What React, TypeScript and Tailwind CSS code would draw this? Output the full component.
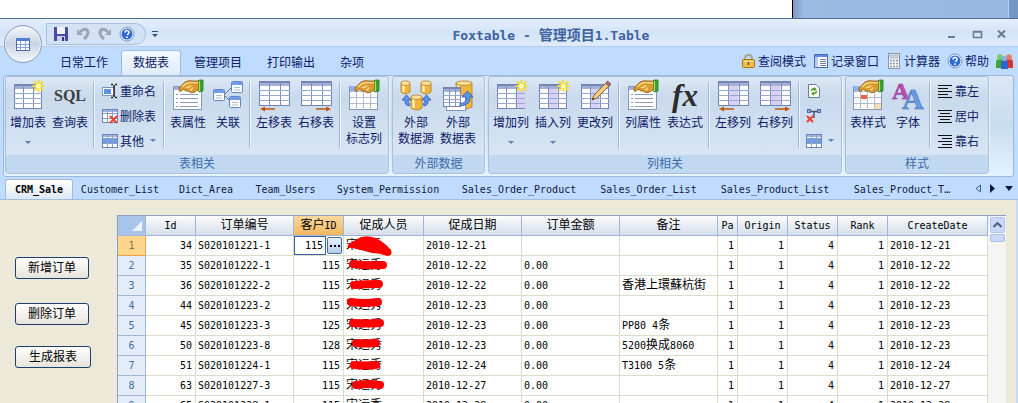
import React, { useState } from 'react';

const MONO = "font-['DejaVu_Sans_Mono','Noto_Sans_CJK_SC',monospace]";

/** Latin runs are set smaller than Chinese ones so that both keep the half/full width rhythm. */
function Mixed({ text, latin = 'text-[10px]' }: { text: string; latin?: string }) {
  const parts = text.match(/[\x00-\x7F…]+|[^\x00-\x7F…]+/g) ?? [];
  return (
    <>
      {parts.map((p, i) =>
        /^[\x00-\x7F…]/.test(p) ? (
          <span key={i} className={`leading-none ${MONO} ${latin}`}>
            {p}
          </span>
        ) : (
          <React.Fragment key={i}>{p}</React.Fragment>
        )
      )}
    </>
  );
}

/* ---------- icons ---------- */

function Svg({ size = 32, children }: { size?: number; children: React.ReactNode }) {
  return (
    <svg
      width={size}
      height={size}
      viewBox={`0 0 ${size} ${size}`}
      className="shrink-0 overflow-visible"
      aria-hidden="true"
    >
      {children}
    </svg>
  );
}

function Grid({ x = 2, y = 4, w = 28, h = 25, hl }: { x?: number; y?: number; w?: number; h?: number; hl?: number }) {
  const cw = w / 3;
  const rh = (h - 5) / 4;
  return (
    <g>
      <rect x={x + 0.5} y={y + 0.5} width={w - 1} height={h - 1} fill="#fff" stroke="#6f83b4" />
      <rect x={x} y={y} width={w} height={5} fill="#7485b4" />
      <rect x={x + 1} y={y + 2} width={w - 2} height={3} fill="#a3b1d4" />
      {hl !== undefined && <rect x={x + hl * cw} y={y + 5} width={cw} height={h - 6} fill="#d9d0f5" />}
      {[1, 2].map((c) => (
        <path key={c} d={`M${Math.round(x + c * cw) + 0.5} ${y}V${y + h}`} stroke="#7d90bd" />
      ))}
      {[1, 2, 3].map((r) => (
        <path key={r} d={`M${x} ${y + 5 + Math.round(r * rh) - 0.5}H${x + w}`} stroke="#98a8cc" />
      ))}
    </g>
  );
}

const Star = () => (
  <g>
    <path d="M26.5 0V12M20.5 6H32.5M22 1.500L31 10.500M31 1.500L22 10.500" stroke="#f3dc3a" strokeWidth="2" />
    <circle cx="26.5" cy="6" r="2.6" fill="#fff9a8" />
  </g>
);

const Hand = () => (
  <g>
    <path
      d="M7 10Q6 8 9 6L13 2Q16 0 21 1H27V10Q24 10 23 12Q19 14 16 11Q13 12 12 9L9 11Q7 12 7 10Z"
      fill="#d99a30"
      stroke="#8a5a16"
      strokeWidth="0.8"
    />
    <path d="M10 7L14 3.500Q18 2 26 3M14 7.500Q17 8 19 5.500M18 10Q20 10 21 7.500" stroke="#f9dc90" strokeWidth="1.4" fill="none" />
    <path d="M27 0H31V11L27 12Z" fill="#3aa52f" stroke="#23771f" strokeWidth="0.8" />
    <path d="M27.500 1V11" stroke="#b6e35c" />
  </g>
);

const GridStar = ({ hl }: { hl?: number }) => (
  <Svg>
    <Grid hl={hl} />
    <Star />
  </Svg>
);

const MoveIcon = ({ dir, hl }: { dir: 'left' | 'right'; hl?: number }) => (
  <Svg>
    <Grid x={1} y={1} w={31} h={25} hl={hl} />
    {dir === 'left' ? (
      <path d="M2 29L7 26.5V28.2H17V29.8H7V31.5Z" fill="#c4550f" />
    ) : (
      <path d="M31 29L26 26.5V28.2H16V29.8H26V31.5Z" fill="#c4550f" />
    )}
  </Svg>
);

const PropertyIcon = () => (
  <Svg>
    <rect x="1.5" y="6.5" width="28" height="23" fill="#fff" stroke="#8a97b4" />
    <rect x="2" y="7" width="6" height="3" fill="#9bb4e6" />
    <path d="M4 14.5H6M8 14.5H26M4 18.5H6M8 18.5H26M4 22.5H6M8 22.5H26M4 26.5H6M8 26.5H26" stroke="#8f9bb8" />
    <Hand />
  </Svg>
);

const HandGridIcon = ({ mark }: { mark?: boolean }) => (
  <Svg>
    <rect x="1.5" y="6.5" width="28" height="23" fill="#fff" stroke="#8a97b4" />
    <rect x="2" y="6" width="8" height="5" fill="#92b0ec" />
    <path d="M8.5 11V30M15.5 11V30M22.5 11V30M2 11.5H29M2 17.5H29M2 23.5H29" stroke="#b4bccd" />
    {mark && <rect x="9" y="15" width="6" height="4" fill="#f2633c" />}
    {mark && <rect x="23" y="24" width="6" height="5" fill="#fbdfb0" />}
    <Hand />
  </Svg>
);

const MiniWin = ({ x, y }: { x: number; y: number }) => (
  <g>
    <rect x={x + 0.5} y={y + 0.5} width="11" height="11" rx="1" fill="#fff" stroke="#6585bd" />
    <rect x={x + 1} y={y + 1} width="10" height="3" fill="#6f9ce8" />
    <path d={`M${x + 3} ${y + 6.5}H${x + 9}M${x + 3} ${y + 9}H${x + 9}`} stroke="#aebbd4" />
  </g>
);

const RelationIcon = () => (
  <Svg>
    <path d="M13 14L20 7M13 16L18 21" stroke="#5f6f8f" />
    <MiniWin x={1} y={9} />
    <MiniWin x={19} y={1} />
    <MiniWin x={17} y={16} />
  </Svg>
);

const Cylinder = ({ x, y, w = 11, h = 14 }: { x: number; y: number; w?: number; h?: number }) => (
  <g stroke="#b47a1d" strokeWidth="0.8">
    <path
      d={`M${x} ${y + 2}V${y + h - 2}Q${x + w / 2} ${y + h + 2} ${x + w} ${y + h - 2}V${y + 2}Z`}
      fill="#f0b53c"
    />
    <path d={`M${x + 2.5} ${y + 4}V${y + h - 2}`} stroke="#fff0b4" strokeWidth="2.5" />
    <ellipse cx={x + w / 2} cy={y + 2.2} rx={w / 2} ry="2.2" fill="#ffe39a" />
  </g>
);

const DataSourceIcon = () => (
  <Svg>
    <Cylinder x={1} y={1} w={9} h={13} />
    <Cylinder x={21} y={1} w={10} h={13} />
    <Cylinder x={11} y={15} w={11} h={15} />
    <path d="M9 26Q4 25 5 20H2L6.500 15L11 20H8Q8 23 10 24Z" fill="#5b93e8" stroke="#2c5aae" strokeWidth="0.8" />
    <path d="M24 26Q29 25 28 20H31L26.500 15L22 20H25Q25 23 23 24Z" fill="#5b93e8" stroke="#2c5aae" strokeWidth="0.8" />
  </Svg>
);

const DataTableIcon = () => (
  <Svg>
    <Cylinder x={14} y={1} w={16} h={28} />
    <rect x="4.500" y="15.500" width="19" height="15" fill="#fff" stroke="#8594b5" />
    <Grid x={1} y={7} w={18} h={20} />
    <path d="M18 23Q25 24 24 17H20L25.500 11L31 17H28Q29 25 18 26Z" fill="#5b93e8" stroke="#2c5aae" strokeWidth="0.8" />
  </Svg>
);

const EditColIcon = () => (
  <Svg>
    <Grid hl={1} />
    <path d="M13 20L15 15L28 2L31 5L18 18Z" fill="#f3cb82" stroke="#8d6430" />
    <path d="M26.500 3.500L28.500 1L32 4L30 6.500Z" fill="#c8546a" stroke="#4f7a64" strokeWidth="0.8" />
    <path d="M13 20L14 17.500L15.500 19Z" fill="#333" />
  </Svg>
);

const FontsIcon = () => (
  <Svg>
    <g className="font-['Liberation_Serif',serif] font-bold">
      <text x="0" y="19" fontSize="24" fill="#c04bb4" stroke="#8c2f88" strokeWidth="0.5">
        A
      </text>
      <text x="10" y="29" fontSize="30" fill="#6a9be0" stroke="#3c69ad" strokeWidth="0.5">
        A
      </text>
    </g>
  </Svg>
);

const SmallGrid = ({ red, band }: { red?: boolean; band?: boolean }) => (
  <Svg size={16}>
    <rect x="0.500" y="1.500" width="15" height="13" fill="#fff" stroke="#6d83b5" />
    <rect x="1" y="2" width="14" height="2" fill="#9db4e2" />
    {band && <rect x="1" y="6" width="14" height="4" fill="#6f9be6" />}
    <path d="M5.500 2V14M10.500 2V14M1 5.500H15M1 10.500H15" stroke="#8f9fc4" />
    {red && <path d="M8 8L15 15M15 8L8 15" stroke="#e8412c" strokeWidth="2" />}
  </Svg>
);

const RenameIcon = () => (
  <Svg size={16}>
    <rect x="0.500" y="4.500" width="12" height="8" fill="#fff" stroke="#7e95c1" />
    <rect x="2" y="6" width="7" height="5" fill="#5d8fe6" />
    <path d="M9 1.500H11M13 1.500H15M12 2V14M9 14.500H11M13 14.500H15" stroke="#222" strokeWidth="1.500" />
  </Svg>
);

const RefreshIcon = () => (
  <Svg size={16}>
    <path d="M2.500 1.500H10L13.500 5V14.500H2.500Z" fill="#fdfdf2" stroke="#6b7c8e" />
    <path d="M5.500 8Q6 5 9 6M10.500 8Q10 11 7 10.500" stroke="#4a9a27" strokeWidth="1.500" fill="none" />
    <path d="M8 4L11 6.500L8 8ZM8 8.500L5 10.500L8 12.500Z" fill="#4a9a27" />
  </Svg>
);

const FilterOffIcon = () => (
  <Svg size={16}>
    <path d="M4 3.500H12M8 4V10" fill="none" stroke="#46536e" strokeWidth="1.500" />
    <rect x="1.500" y="1.500" width="3" height="3" fill="#8fabdf" stroke="#4b66a4" />
    <rect x="11.500" y="1.500" width="3" height="3" fill="#8fabdf" stroke="#4b66a4" />
    <path d="M1 8L7 14M7 8L1 14" stroke="#e8412c" strokeWidth="2" />
  </Svg>
);

const AlignIcon = ({ kind }: { kind: 'left' | 'center' | 'right' }) => {
  const start = { left: 1, center: 3, right: 5 }[kind];
  return (
    <Svg size={16}>
      <path d={`M1 2.500H15M${start} 5.500h10M1 8.500H15M${start} 11.500h10M1 14.500H15`} stroke="#111" strokeWidth="1" />
    </Svg>
  );
};

const HelpIcon = () => (
  <Svg size={16}>
    <circle cx="8" cy="8" r="7" fill="#eef4ff" stroke="#7a96c8" />
    <circle cx="8" cy="8" r="5.500" fill="#2f6bd0" />
    <path d="M6 6.500Q6 4.500 8 4.500T10 6.500Q10 7.500 8 8.800" stroke="#fff" strokeWidth="1.500" fill="none" />
    <circle cx="8" cy="11.200" r="0.900" fill="#fff" />
  </Svg>
);

const LockIcon = () => (
  <Svg size={16}>
    <path d="M5 7V5Q5 2 8.500 2T12 5V7" fill="none" stroke="#a9a183" strokeWidth="1.800" />
    <rect x="2.500" y="6.500" width="12" height="8" rx="1" fill="#f1be45" stroke="#a8741a" />
    <path d="M4 8.500H13" stroke="#ffe9a2" />
    <path d="M8.500 9V12" stroke="#6d4a12" strokeWidth="1.500" />
  </Svg>
);

const RecordIcon = () => (
  <Svg size={16}>
    <rect x="1.500" y="1.500" width="13" height="13" fill="#fff" stroke="#4a69ae" />
    <rect x="2" y="2" width="12" height="2" fill="#5f8be0" />
    <rect x="2" y="4" width="3" height="10" fill="#b6cbf3" />
    <path d="M7 6.500H13M7 8.500H13M7 10.500H13M7 12.500H13" stroke="#6b7fae" />
  </Svg>
);

const CalcIcon = () => (
  <Svg size={16}>
    <rect x="2.500" y="0.500" width="11" height="15" fill="#f2f3f5" stroke="#8b95a6" />
    <rect x="4" y="2" width="8" height="3" fill="#c5d6e4" stroke="#8795a8" strokeWidth="0.500" />
    <path d="M4 7.500H12M4 10.500H12M4 13.500H12" stroke="#8f99aa" strokeWidth="1.500" strokeDasharray="2 1" />
  </Svg>
);

const PeopleIcon = () => (
  <svg width="17" height="16" viewBox="0 0 17 16" aria-hidden="true">
    <path d="M0 15V9Q0 6 4 6T8 9V15Z" fill="#38a838" />
    <circle cx="4" cy="4" r="2.800" fill="#70cf62" />
    <path d="M9 15V9Q9 6 13 6T17 9V15Z" fill="#dc3528" />
    <circle cx="13" cy="4" r="2.800" fill="#ee7c60" />
    <path d="M5 16V10Q5 7 8.500 7T12 10V16Z" fill="#2f62cc" />
    <circle cx="8.500" cy="5.500" r="2.600" fill="#84aaf0" />
  </svg>
);

const SaveIcon = () => (
  <Svg size={16}>
    <path d="M1 1H14L15 2V15H1Z" fill="#4a4aa8" />
    <rect x="4" y="1" width="8" height="7" fill="#eef2ff" />
    <rect x="4" y="10" width="8" height="5" fill="#c8d0ec" />
    <rect x="9" y="11" width="2" height="4" fill="#32327e" />
  </Svg>
);

const UndoIcon = ({ flip }: { flip?: boolean }) => (
  <Svg size={16}>
    <g transform={flip ? 'translate(16 0) scale(-1 1)' : undefined}>
      <path d="M5 6Q9 2 12 4Q15 8 9 13" fill="none" stroke="#9ba5b4" strokeWidth="3" />
      <path d="M2 3V9H8Z" fill="#9ba5b4" />
    </g>
  </Svg>
);

const Arrow = () => <span className="inline-block border-x-[3px] border-t-[3px] border-x-transparent border-t-[#6180ad]" />;

/* ---------- ribbon ---------- */

interface BigProps {
  icon: React.ReactNode;
  lines: string[];
  drop?: boolean;
  narrow?: boolean;
}

function BigButton({ icon, lines, drop, narrow }: BigProps) {
  return (
    <button
      type="button"
      className={`flex flex-col items-center pt-[2px] text-[12px] leading-4 whitespace-nowrap ${narrow ? 'w-[38px]' : 'w-[42px]'}`}
    >
      <span className="mb-[2px] flex h-8 items-center justify-center">{icon}</span>
      {lines.map((l) => (
        <span key={l}>{l}</span>
      ))}
      {drop && (
        <span className="flex h-6 items-center">
          <Arrow />
        </span>
      )}
    </button>
  );
}

function SmallButton({ icon, label, drop }: { icon: React.ReactNode; label?: string; drop?: boolean }) {
  return (
    <button type="button" aria-label={label ?? '列选项'} className="flex h-[25px] items-center gap-[2px] text-[12px] whitespace-nowrap">
      {icon}
      {label}
      {drop && (
        <span className="ml-1 flex">
          <Arrow />
        </span>
      )}
    </button>
  );
}

const Sep = () => (
  <div className="flex h-[70px] w-[6px] shrink-0 justify-center pt-1">
    <div className="w-px bg-[#9fb7d6]" />
    <div className="w-px bg-[#eef5fd]" />
  </div>
);

function Group({ title, width, children }: { title: string; width: string; children: React.ReactNode }) {
  return (
    <section
      className={`flex h-[98px] shrink-0 flex-col overflow-hidden rounded-[3px] border border-[#a9c0dc] bg-linear-to-b from-[#dce8f5] via-[#c9daed] via-20% to-[#dbe8f6] shadow-[1px_1px_0_#eef6ff] ${width}`}
    >
      <div className="flex flex-1 px-[1px] pt-[1px]">{children}</div>
      <h2 className="h-[18px] bg-[#c1d8f1] text-center text-[12px] leading-4 text-[#3e6aaa]">{title}</h2>
    </section>
  );
}

function Ribbon() {
  return (
    <div className="mr-1 ml-[3px] flex h-[102px] gap-[3px] rounded-[3px] border border-[#9cb8db] bg-linear-to-b from-[#dbe7f5] via-[#c9dcf0] to-[#e4f3ff] px-[1px]">
      <Group title="表相关" width="w-[384px]">
        <BigButton icon={<GridStar />} lines={['增加表']} drop />
        <BigButton
          icon={<span className="font-['Liberation_Serif',serif] text-[16px] font-bold text-[#3d3d3d]">SQL</span>}
          lines={['查询表']}
        />
        <Sep />
        <div className="w-[64px] pl-[5px]">
          <SmallButton icon={<RenameIcon />} label="重命名" />
          <SmallButton icon={<SmallGrid red />} label="删除表" />
          <SmallButton icon={<SmallGrid band />} label="其他" drop />
        </div>
        <Sep />
        <BigButton icon={<PropertyIcon />} lines={['表属性']} />
        <BigButton icon={<RelationIcon />} lines={['关联']} narrow />
        <Sep />
        <BigButton icon={<MoveIcon dir="left" />} lines={['左移表']} />
        <BigButton icon={<MoveIcon dir="right" />} lines={['右移表']} />
        <Sep />
        <BigButton icon={<HandGridIcon />} lines={['设置', '标志列']} />
      </Group>

      <Group title="外部数据" width="w-[93px]">
        <div className="flex pl-[1px]">
          <BigButton icon={<DataSourceIcon />} lines={['外部', '数据源']} />
          <BigButton icon={<DataTableIcon />} lines={['外部', '数据表']} />
        </div>
      </Group>

      <Group title="列相关" width="w-[354px]">
        <BigButton icon={<GridStar hl={2} />} lines={['增加列']} drop />
        <BigButton icon={<GridStar hl={1} />} lines={['插入列']} drop />
        <BigButton icon={<EditColIcon />} lines={['更改列']} />
        <Sep />
        <BigButton icon={<PropertyIcon />} lines={['列属性']} />
        <BigButton
          icon={<span className="font-['Liberation_Serif',serif] text-[31px] leading-8 font-bold text-[#2b2b2b] italic">fx</span>}
          lines={['表达式']}
        />
        <Sep />
        <BigButton icon={<MoveIcon dir="left" hl={1} />} lines={['左移列']} />
        <BigButton icon={<MoveIcon dir="right" hl={1} />} lines={['右移列']} />
        <Sep />
        <div className="pl-1">
          <SmallButton icon={<RefreshIcon />} />
          <SmallButton icon={<FilterOffIcon />} />
          <SmallButton icon={<SmallGrid band />} drop />
        </div>
      </Group>

      <Group title="样式" width="w-[144px]">
        <BigButton icon={<HandGridIcon mark />} lines={['表样式']} />
        <BigButton icon={<FontsIcon />} lines={['字体']} narrow />
        <Sep />
        <div className="pl-1">
          <SmallButton icon={<AlignIcon kind="left" />} label="靠左" />
          <SmallButton icon={<AlignIcon kind="center" />} label="居中" />
          <SmallButton icon={<AlignIcon kind="right" />} label="靠右" />
        </div>
      </Group>
    </div>
  );
}

/* ---------- title bar and menu ---------- */

function TitleBar() {
  return (
    <header className="flex h-[29px] items-center border-t border-b border-t-[#4d6d9c] border-b-[#b3cdee] bg-linear-to-b from-[#e6f0fd] via-[#d3e3f8] to-[#e0ecfb] pt-[3px]">
      <div className="ml-[46px] flex h-[22px] w-[100px] items-center gap-[6px] rounded-r-full border border-[#a5bfdf] bg-[#d3e2f5] pl-[6px]">
        <button type="button" aria-label="保存">
          <SaveIcon />
        </button>
        <button type="button" aria-label="撤消">
          <UndoIcon />
        </button>
        <button type="button" aria-label="重做">
          <UndoIcon flip />
        </button>
        <button type="button" aria-label="帮助">
          <HelpIcon />
        </button>
      </div>
      <button type="button" aria-label="自定义" className="ml-[6px] flex flex-col items-center gap-[2px]">
        <span className="h-px w-[6px] bg-[#31507f]" />
        <span className="border-x-[3px] border-t-[3px] border-x-transparent border-t-[#31507f]" />
      </button>
      <h1 className="flex-1 text-center text-[14px] leading-5 font-bold whitespace-pre text-[#3e629f]">
        <Mixed text="Foxtable - 管理项目1.Table" latin="text-[13px]" />
      </h1>
      <div className="mr-[8px] flex items-center gap-[9px]">
        <button type="button" aria-label="最小化">
          <Svg size={16}>
            <path d="M4 11H11" stroke="#6b7a92" strokeWidth="2" />
          </Svg>
        </button>
        <button type="button" aria-label="最大化">
          <Svg size={16}>
            <path d="M4.500 5.500H12.500V11.500H4.500ZM4 6H13" stroke="#6b7a92" strokeWidth="1.500" fill="none" />
          </Svg>
        </button>
        <button type="button" aria-label="关闭">
          <Svg size={16}>
            <path d="M4 4.500L11 11.500M11 4.500L4 11.500" stroke="#6b7a92" strokeWidth="2" />
          </Svg>
        </button>
      </div>
    </header>
  );
}

const MENUS = ['日常工作', '数据表', '管理项目', '打印输出', '杂项'];

function MenuBar() {
  const [active, setActive] = useState('数据表');
  return (
    <nav className="flex h-[28px] items-end justify-between pr-[5px] pl-[48px] text-[12px]">
      <div className="flex">
        {MENUS.map((m) => (
          <button
            key={m}
            type="button"
            onClick={() => setActive(m)}
            className={`mr-[1px] h-[25px] rounded-t-[3px] border border-b-0 px-[11px] pb-[3px] ${
              m === active ? 'border-[#9cbce4] bg-linear-to-b from-[#f4f9ff] to-[#dfeafa]' : 'border-transparent'
            }`}
          >
            {m}
          </button>
        ))}
      </div>
      <div className="flex h-7 items-center gap-[7px]">
        <button type="button" className="flex items-center gap-[2px]">
          <LockIcon />
          查阅模式
        </button>
        <button type="button" className="flex items-center gap-[2px]">
          <RecordIcon />
          记录窗口
        </button>
        <button type="button" className="flex items-center gap-[2px]">
          <CalcIcon />
          计算器
        </button>
        <button type="button" className="flex items-center gap-[2px]">
          <HelpIcon />
          帮助
        </button>
        <button type="button" aria-label="用户">
          <PeopleIcon />
        </button>
      </div>
    </nav>
  );
}

/* ---------- sheets ---------- */

const SHEETS = [
  { name: 'CRM_Sale', width: 'w-[68px]' },
  { name: 'Customer_List', width: 'w-[94px]' },
  { name: 'Dict_Area', width: 'w-[78px]' },
  { name: 'Team_Users', width: 'w-[81px]' },
  { name: 'System_Permission', width: 'w-[124px]' },
  { name: 'Sales_Order_Product', width: 'w-[138px]' },
  { name: 'Sales_Order_List', width: 'w-[121px]' },
  { name: 'Sales_Product_List', width: 'w-[132px]' },
  { name: 'Sales_Product_T…', width: 'w-[122px]' },
];

function SheetTabs() {
  return (
    <div className="flex h-[23px] items-end justify-between border-b border-[#a3bddd] bg-[#bfdbff] pr-[5px] pl-[5px]">
      <div className={`flex text-[10px] text-[#101840] ${MONO}`}>
        {SHEETS.map((s, i) => (
          <button
            key={s.name}
            type="button"
            className={`h-5 shrink-0 whitespace-nowrap ${s.width} ${
              i === 0
                ? 'rounded-t-[3px] border border-b-0 border-[#a3b9d6] bg-linear-to-b from-white to-[#dde8f6] font-bold text-black'
                : ''
            }`}
          >
            {s.name}
          </button>
        ))}
      </div>
      <div className="flex h-[22px] items-center gap-[9px]">
        <button type="button" aria-label="上一页" className="flex">
          <svg width="6" height="9" viewBox="0 0 6 9">
            <path d="M5.500 1V8L1 4.500Z" fill="none" stroke="#3f5f93" />
          </svg>
        </button>
        <button type="button" aria-label="下一页" className="flex">
          <svg width="6" height="9" viewBox="0 0 6 9">
            <path d="M0 0V9L5 4.500Z" fill="#101840" />
          </svg>
        </button>
        <button type="button" aria-label="全部表" className="flex">
          <svg width="8" height="5" viewBox="0 0 8 5">
            <path d="M0 0H8L4 5Z" fill="#101840" />
          </svg>
        </button>
      </div>
    </div>
  );
}

const COLUMNS = [
  { name: 'Id', width: 'w-[50px]' },
  { name: '订单编号', width: 'w-[98px]' },
  { name: '客户ID', width: 'w-[50px]' },
  { name: '促成人员', width: 'w-[80px]' },
  { name: '促成日期', width: 'w-[98px]' },
  { name: '订单金额', width: 'w-[98px]' },
  { name: '备注', width: 'w-[98px]' },
  { name: 'Pa', width: 'w-[20px]' },
  { name: 'Origin', width: 'w-[50px]' },
  { name: 'Status', width: 'w-[50px]' },
  { name: 'Rank', width: 'w-[50px]' },
  { name: 'CreateDate', width: 'w-[100px]' },
];

interface Order {
  id: number;
  code: string;
  customer: number;
  date: string;
  amount: string;
  note: string;
  /** Marker stroke over the contact name, in cell coordinates. */
  mark?: string;
}

const ORDERS: Order[] = [
  { id: 34, code: 'S020101221-1', customer: 115, date: '2010-12-21', amount: '', note: '' },
  { id: 35, code: 'S020101222-1', customer: 115, date: '2010-12-22', amount: '0.00', note: '', mark: 'M9 8Q22 10 39 9' },
  { id: 36, code: 'S020101222-2', customer: 115, date: '2010-12-22', amount: '0.00', note: '香港上環蘇杭街', mark: 'M10 9Q22 8 35 8' },
  { id: 44, code: 'S020101223-2', customer: 115, date: '2010-12-23', amount: '0.00', note: '', mark: 'M7 6Q20 8 34 6' },
  { id: 45, code: 'S020101223-3', customer: 125, date: '2010-12-23', amount: '0.00', note: 'PP80 4条', mark: 'M9 7Q22 8 36 7' },
  { id: 50, code: 'S020101223-8', customer: 128, date: '2010-12-23', amount: '0.00', note: '5200换成8060', mark: 'M12 7Q20 8 32 7' },
  { id: 51, code: 'S020101224-1', customer: 115, date: '2010-12-24', amount: '0.00', note: 'T3100 5条', mark: 'M10 9Q22 10 32 9' },
  { id: 63, code: 'S020101227-3', customer: 115, date: '2010-12-27', amount: '0.00', note: '', mark: 'M12 9Q25 7 36 9' },
  { id: 65, code: 'S020101228-1', customer: 115, date: '2010-12-28', amount: '0.00', note: '' },
];

const CELL = 'h-5 border-r border-b border-[#dcdccb] pt-0 pb-[3px] whitespace-nowrap overflow-hidden';
const NUM = `${CELL} pr-[3px] pl-0 text-right`;
const TXT = `${CELL} pr-0 pl-[2px] text-left`;

function OrderRow({ order, index }: { order: Order; index: number }) {
  const first = index === 0;
  return (
    <tr>
      <th
        scope="row"
        className={`h-5 border-r border-b px-0 pt-0 pb-[3px] text-center font-normal ${
          first ? 'border-[#f0a04c] bg-[#ffd58c] text-[#7c7050]' : 'border-[#9eb6d8] bg-[#e3ecf8] text-[#3f6ca8]'
        }`}
      >
        <Mixed text={String(index + 1)} />
      </th>
      <td className={NUM}>
        <Mixed text={String(order.id)} />
      </td>
      <td className={TXT}>
        <Mixed text={order.code} />
      </td>
      {first ? (
        <td className="h-5 border-r border-b border-[#dcdccb] p-0">
          <div className="flex h-[19px] items-center">
            <input
              aria-label="客户ID"
              defaultValue={order.customer}
              className={`h-[19px] w-8 min-w-0 border border-[#3c5cae] bg-white pr-[2px] text-right text-[10px] outline-none ${MONO}`}
            />
            <button
              type="button"
              aria-label="选择客户"
              className="ml-px flex h-[17px] w-[15px] items-center justify-center gap-[2px] rounded-[2px] border border-[#4a6c9c] bg-linear-to-b from-[#eaf2fd] to-[#b4cbec]"
            >
              <span className="size-[2px] bg-black" />
              <span className="size-[2px] bg-black" />
              <span className="size-[2px] bg-black" />
            </button>
          </div>
        </td>
      ) : (
        <td className={NUM}>
          <Mixed text={String(order.customer)} />
        </td>
      )}
      <td className="h-5 border-r border-b border-[#dcdccb] pt-0 pr-0 pb-[3px] pl-[2px] text-left whitespace-nowrap">
        <div className="relative">
          宋运秀
          {first && (
            <svg className="absolute -top-px left-0 z-10" width="50" height="22" viewBox="0 0 50 22" aria-hidden="true">
              <path d="M2 10Q7 6 11 4Q18 -1 30 3Q38 7 45 15Q47 21 41 21Q34 18 26 18Q16 15 6 13Q0 13 2 10Z" fill="#fe0000" />
            </svg>
          )}
          {order.mark && (
            <svg className="absolute top-0 -left-[2px]" width="50" height="19" viewBox="0 0 50 19" aria-hidden="true">
              <path d={order.mark} fill="none" stroke="#fe0000" strokeWidth="8" strokeLinecap="round" />
            </svg>
          )}
        </div>
      </td>
      <td className={TXT}>
        <Mixed text={order.date} />
      </td>
      <td className={TXT}>
        <Mixed text={order.amount} />
      </td>
      <td className={TXT}>
        <Mixed text={order.note} />
      </td>
      {[1, 1, 4, 1].map((v, i) => (
        <td key={i} className={NUM}>
          <Mixed text={String(v)} />
        </td>
      ))}
      <td className={TXT}>
        <Mixed text={order.date} />
      </td>
    </tr>
  );
}

function OrderTable() {
  return (
    <div className="mt-[15px] mr-[10px] flex min-w-0 flex-1 self-stretch border border-b-0 border-[#8ba0bd] bg-white">
      <table className="w-full table-fixed border-separate border-spacing-0 self-start text-[12px] leading-4 text-black">
        <thead>
          <tr>
            <th scope="col" className="h-5 w-7 border-r border-b border-[#9eb6d8] bg-[#a9c4e9] p-0">
              <div className="flex justify-end pr-[3px]">
                <svg width="10" height="10" viewBox="0 0 10 10" aria-label="全选">
                  <path d="M10 0V10H0Z" fill="#eaf2fc" />
                </svg>
              </div>
            </th>
            {COLUMNS.map((c) => (
              <th
                key={c.name}
                scope="col"
                className={`h-5 border-r border-b border-[#9eb6d8] px-0 pt-0 pb-[3px] text-center font-normal whitespace-nowrap ${c.width} ${
                  c.name === '客户ID'
                    ? 'bg-linear-to-b from-[#f9d9a0] to-[#f2b65c]'
                    : 'bg-linear-to-b from-[#fbfcfe] to-[#d5deea]'
                }`}
              >
                <Mixed text={c.name} />
              </th>
            ))}
          </tr>
        </thead>
        <tbody>
          {ORDERS.map((o, i) => (
            <OrderRow key={o.id} order={o} index={i} />
          ))}
        </tbody>
      </table>
      <div className="flex w-[18px] shrink-0 flex-col items-center bg-[#f5f5f1]">
        <button
          type="button"
          aria-label="向上滚动"
          className="mt-px flex h-4 w-[15px] items-center justify-center rounded-[2px] border border-[#b3c5ec] bg-[#c9d8fb]"
        >
          <svg width="9" height="6" viewBox="0 0 9 6">
            <path d="M0.500 5L4.500 1L8.500 5" fill="none" stroke="#4d6185" strokeWidth="2" />
          </svg>
        </button>
        <div className="mt-px h-[8px] w-[15px] rounded-[2px] border border-[#a9bff0] bg-[#c9d8fb]" />
      </div>
    </div>
  );
}

const FORM_BUTTON =
  'h-[22px] rounded-[3px] border border-[#1c3f6e] bg-linear-to-b from-white to-[#e6e4da] pb-[3px] text-[12px] leading-none text-black';

export default function App() {
  return (
    <div className="flex h-screen flex-col overflow-hidden bg-[#bfdbff] font-['Noto_Sans_CJK_SC',sans-serif] text-[#0d1a66]">
      <div className="flex h-[18px] shrink-0 bg-[#9bb9e0]">
        <div className="w-[793px] border-r border-black bg-white" />
        <div className="flex-1 bg-linear-to-r from-[#7c9cc8] via-[#9cbae2] via-5% to-[#98b6df]" />
        <div className="w-[10px] border-l border-[#b9cfee] bg-[#7595c4]" />
      </div>
      <div className="relative shrink-0">
        <TitleBar />
        <MenuBar />
        <button
          type="button"
          aria-label="主菜单"
          className="absolute top-[7px] left-1 flex size-[38px] items-center justify-center rounded-full border border-[#8a9dba] bg-linear-to-b from-[#f7f9fc] via-[#c9d3e2] to-[#f4f8fd] shadow-[inset_0_0_0_1px_#eef3fa]"
        >
          <Svg size={16}>
            <rect x="1.500" y="2.500" width="13" height="12" fill="#fff" stroke="#4c6bae" />
            <rect x="1" y="2" width="14" height="3" fill="#4f7fd6" />
            <path d="M5.500 5V14M10.500 5V14M2 8.500H14M2 11.500H14" stroke="#8ba6da" />
          </Svg>
        </button>
        <Ribbon />
      </div>
      <SheetTabs />
      <main className="mr-[2px] flex min-h-0 flex-1 bg-[#ece9d8]">
        <div className="flex w-[117px] shrink-0 flex-col items-start pt-[57px] pl-[15px]">
          <button type="button" className={`${FORM_BUTTON} mb-6 w-[74px]`}>
            新增订单
          </button>
          <button type="button" className={`${FORM_BUTTON} mb-[21px] w-[74px]`}>
            删除订单
          </button>
          <button type="button" className={`${FORM_BUTTON} w-[76px]`}>
            生成报表
          </button>
        </div>
        <OrderTable />
      </main>
    </div>
  );
}
